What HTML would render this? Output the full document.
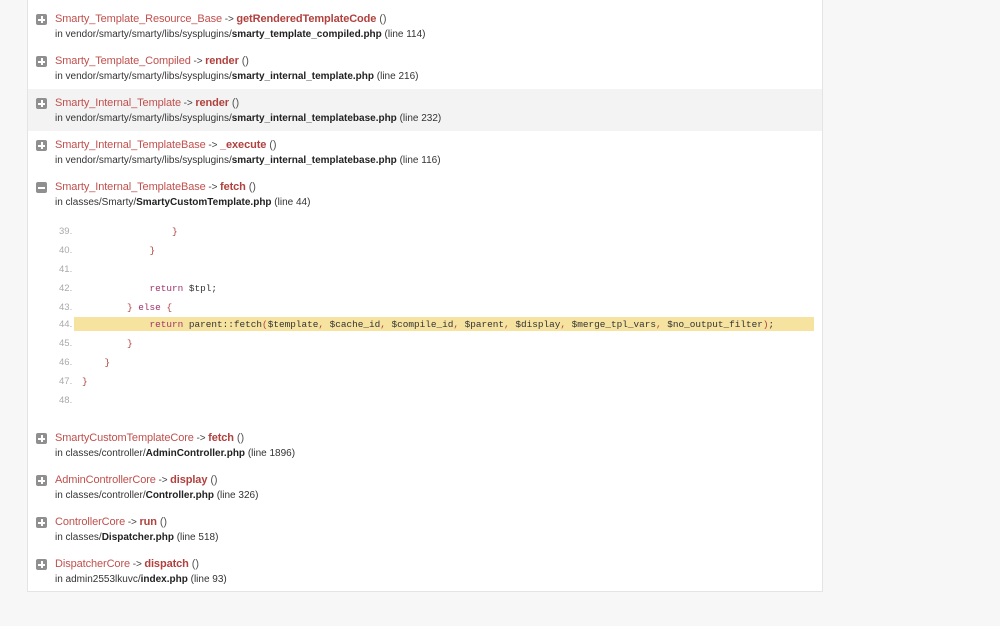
<!DOCTYPE html>
<html><head><meta charset="utf-8"><style>
body{margin:0;background:#f7f7f7;width:1000px;height:626px;overflow:hidden;font-family:"Liberation Sans",Arial,sans-serif}
.box{position:absolute;left:27px;top:-1px;width:794px;height:591px;background:#fff;border:1px solid #e4e4e4}
.row{position:absolute;left:0;width:794px;height:42px}
.ic{position:absolute;left:8px;top:13px;width:11px;height:11px;background:#8f8f8f;border-radius:2px}
.ic:before{content:"";position:absolute;left:2px;top:4.5px;width:7px;height:2px;background:#fff}
.ic.p:after{content:"";position:absolute;left:4.5px;top:2px;width:2px;height:7px;background:#fff}
.t{position:absolute;left:27px;top:12px;font-size:11px;color:#c0504d;white-space:nowrap;letter-spacing:-0.1px}
.t .a{color:#444;font-size:10px}
.t b{color:#b0413e}
.t .pa{color:#555}
.f{position:absolute;left:27px;top:28px;font-size:10px;color:#333;white-space:nowrap}
.f b{color:#222}
.code{position:absolute;left:28px;top:222px;width:760px;font-family:"Liberation Mono",monospace;font-size:9.4px}
.ln{position:absolute;left:0;height:19px;line-height:19px;width:760px}
.ln .n{position:absolute;left:3px;color:#aaa;font-family:"Liberation Sans",Arial,sans-serif;font-size:9.5px}
.ln pre{position:absolute;left:26px;margin:0;font:inherit;color:#333;top:0}
.hl{background:#f6e3a0;top:95px;height:14px;line-height:14px;left:18px;width:740px}
.k{color:#a0336a}.s{color:#b0413e}
</style></head><body>
<div class="box">
<div class="row" style="top:1px"><div class="ic p"></div><div class="t">Smarty_Template_Resource_Base<span class="a"> -&gt; </span><b>getRenderedTemplateCode</b><span class="pa"> ()</span></div><div class="f">in vendor/smarty/smarty/libs/sysplugins/<b>smarty_template_compiled.php</b> (line 114)</div></div>
<div class="row" style="top:43px"><div class="ic p"></div><div class="t">Smarty_Template_Compiled<span class="a"> -&gt; </span><b>render</b><span class="pa"> ()</span></div><div class="f">in vendor/smarty/smarty/libs/sysplugins/<b>smarty_internal_template.php</b> (line 216)</div></div>
<div class="row" style="top:89px;background:#f3f3f3;height:42px"><div style="position:absolute;top:-4px;left:0;right:0"><div class="ic p"></div><div class="t">Smarty_Internal_Template<span class="a"> -&gt; </span><b>render</b><span class="pa"> ()</span></div><div class="f">in vendor/smarty/smarty/libs/sysplugins/<b>smarty_internal_templatebase.php</b> (line 232)</div></div></div>
<div class="row" style="top:127px"><div class="ic p"></div><div class="t">Smarty_Internal_TemplateBase<span class="a"> -&gt; </span><b>_execute</b><span class="pa"> ()</span></div><div class="f">in vendor/smarty/smarty/libs/sysplugins/<b>smarty_internal_templatebase.php</b> (line 116)</div></div>
<div class="row" style="top:169px"><div class="ic"></div><div class="t">Smarty_Internal_TemplateBase<span class="a"> -&gt; </span><b>fetch</b><span class="pa"> ()</span></div><div class="f">in classes/Smarty/<b>SmartyCustomTemplate.php</b> (line 44)</div></div>
<div class="code">
<div class="ln" style="top:0"><span class="n">39.</span><pre>                <span class="s">}</span></pre></div>
<div class="ln" style="top:19px"><span class="n">40.</span><pre>            <span class="s">}</span></pre></div>
<div class="ln" style="top:38px"><span class="n">41.</span></div>
<div class="ln" style="top:57px"><span class="n">42.</span><pre>            <span class="k">return</span> $tpl;</pre></div>
<div class="ln" style="top:76px"><span class="n">43.</span><pre>        <span class="s">}</span> <span class="k">else</span> <span class="s">{</span></pre></div>
<div class="ln hl"></div>
<div class="ln" style="top:93px"><span class="n">44.</span><pre>            <span class="k">return</span> parent::fetch<span class="s">(</span>$template<span class="s">,</span> $cache_id<span class="s">,</span> $compile_id<span class="s">,</span> $parent<span class="s">,</span> $display<span class="s">,</span> $merge_tpl_vars<span class="s">,</span> $no_output_filter<span class="s">)</span>;</pre></div>
<div class="ln" style="top:112px"><span class="n">45.</span><pre>        <span class="s">}</span></pre></div>
<div class="ln" style="top:131px"><span class="n">46.</span><pre>    <span class="s">}</span></pre></div>
<div class="ln" style="top:150px"><span class="n">47.</span><pre><span class="s">}</span></pre></div>
<div class="ln" style="top:169px"><span class="n">48.</span></div>
</div>
<div class="row" style="top:420px"><div class="ic p"></div><div class="t">SmartyCustomTemplateCore<span class="a"> -&gt; </span><b>fetch</b><span class="pa"> ()</span></div><div class="f">in classes/controller/<b>AdminController.php</b> (line 1896)</div></div>
<div class="row" style="top:462px"><div class="ic p"></div><div class="t">AdminControllerCore<span class="a"> -&gt; </span><b>display</b><span class="pa"> ()</span></div><div class="f">in classes/controller/<b>Controller.php</b> (line 326)</div></div>
<div class="row" style="top:504px"><div class="ic p"></div><div class="t">ControllerCore<span class="a"> -&gt; </span><b>run</b><span class="pa"> ()</span></div><div class="f">in classes/<b>Dispatcher.php</b> (line 518)</div></div>
<div class="row" style="top:546px"><div class="ic p"></div><div class="t">DispatcherCore<span class="a"> -&gt; </span><b>dispatch</b><span class="pa"> ()</span></div><div class="f">in admin2553lkuvc/<b>index.php</b> (line 93)</div></div>
</div>
</body></html>
